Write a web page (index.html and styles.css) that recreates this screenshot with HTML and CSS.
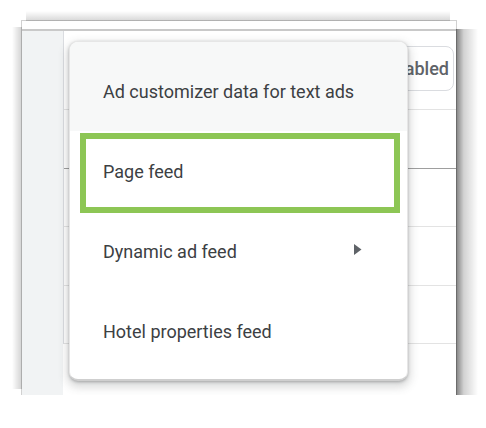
FILE: index.html
```html
<!DOCTYPE html>
<html lang="en">
<head>
<meta charset="utf-8">
<title>Menu</title>
<link rel="stylesheet" href="styles.css">
</head>
<body>
<div class="page">
  <div class="shot">
    <div class="frame">
      <div class="topbar"></div>
      <div class="content">
        <div class="sidebar"></div>
        <div class="main">
          <div class="table">
            <div class="toolbar">
              <div class="chip">Enabled</div>
            </div>
            <div class="row row-dark"></div>
            <div class="row"></div>
            <div class="row"></div>
            <div class="row"></div>
          </div>
        </div>
      </div>
      <div class="menu">
        <div class="item item-hover">Ad customizer data for text ads</div>
        <div class="item item-marked">Page feed<span class="mark"></span></div>
        <div class="item item-sub">Dynamic ad feed
          <svg class="arrow" width="8" height="11" viewBox="0 0 8 11"><polygon points="0,0 7.5,5.5 0,11" fill="#5f6368"/></svg>
        </div>
        <div class="item">Hotel properties feed</div>
      </div>
    </div>
  </div>
</div>
</body>
</html>
```

FILE: styles.css
```css
html, body {
  margin: 0;
  padding: 0;
  background: #ffffff;
}

body {
  font-family: Roboto, "Liberation Sans", Arial, sans-serif;
}

.page {
  padding: 21px 0 0 22px;
}

.shot {
  position: relative;
  width: 434px;
  height: 374px;
}

/* soft photo shadow drawn with gradients around the screenshot frame */
.shot::before {
  content: "";
  position: absolute;
  left: -10px;
  top: -10px;
  width: 466px;
  height: 408px;
  z-index: 0;
  background-image:
    linear-gradient(to right, rgba(0, 0, 0, 0.5), rgba(0, 0, 0, 0.18) 35%, rgba(0, 0, 0, 0)),
    linear-gradient(to bottom, rgba(0, 0, 0, 0.5), rgba(0, 0, 0, 0.18) 35%, rgba(0, 0, 0, 0)),
    linear-gradient(to left, rgba(0, 0, 0, 0.18), rgba(0, 0, 0, 0)),
    linear-gradient(to top, rgba(0, 0, 0, 0.16), rgba(0, 0, 0, 0)),
    radial-gradient(circle at 0 0, rgba(0, 0, 0, 0.45), rgba(0, 0, 0, 0.15) 35%, rgba(0, 0, 0, 0) 100%);
  background-size:
    22px 370px,
    426px 24px,
    10px 362px,
    424px 10px,
    22px 24px;
  background-position:
    444px 18px,
    18px 384px,
    0 16px,
    14px 0,
    444px 384px;
  background-repeat: no-repeat;
}

.frame {
  position: relative;
  z-index: 1;
  width: 434px;
  height: 374px;
  overflow: hidden;
  background: #ffffff;
  outline: 1px solid rgba(0, 0, 0, 0.18);
}

.topbar {
  height: 8px;
  border-bottom: 2px solid #c9c9c9;
}

.content {
  display: flex;
  height: 364px;
}

.sidebar {
  width: 41px;
  background: #f1f3f4;
}

.main {
  flex: 1;
}

.table {
  border-left: 1px solid #dadce0;
}

.toolbar {
  height: 79px;
  box-sizing: border-box;
  border-bottom: 1px solid #e3e3e3;
  display: flex;
  justify-content: flex-end;
  align-items: flex-start;
  padding-top: 15px;
  padding-right: 2px;
}

.chip {
  width: 170px;
  height: 45px;
  box-sizing: border-box;
  border: 1px solid #dadce0;
  border-radius: 8px;
  display: flex;
  align-items: center;
  justify-content: flex-end;
  padding-right: 4px;
  font-size: 18px;
  font-weight: 500;
  color: #5f6368;
}

.row {
  height: 57.5px;
  border-bottom: 1px solid #e3e3e3;
}

.row-dark {
  border-bottom-color: #9e9e9e;
}

.menu {
  position: absolute;
  left: 47px;
  top: 20px;
  width: 339px;
  height: 340px;
  box-sizing: border-box;
  padding: 9px 0;
  background: #ffffff;
  border: 1px solid #e6e6e6;
  border-bottom: 2px solid #cfcfcf;
  border-radius: 9px;
  box-shadow: 0 1px 3px rgba(60, 64, 67, 0.35), 0 4px 10px 2px rgba(60, 64, 67, 0.2);
}

.item {
  position: relative;
  height: 80px;
  display: flex;
  align-items: center;
  justify-content: space-between;
  padding: 0 45px 0 33px;
  font-size: 18px;
  color: #3c4043;
}

.item-hover {
  background: #f7f8f8;
  margin-top: -9px;
  padding-top: 9px;
  border-radius: 8px 8px 0 0;
}

.arrow {
  display: block;
  margin-top: -3px;
}

.mark {
  position: absolute;
  left: 10px;
  right: 7px;
  top: 2px;
  bottom: -2px;
  border: 6px solid #8dc655;
}
```
